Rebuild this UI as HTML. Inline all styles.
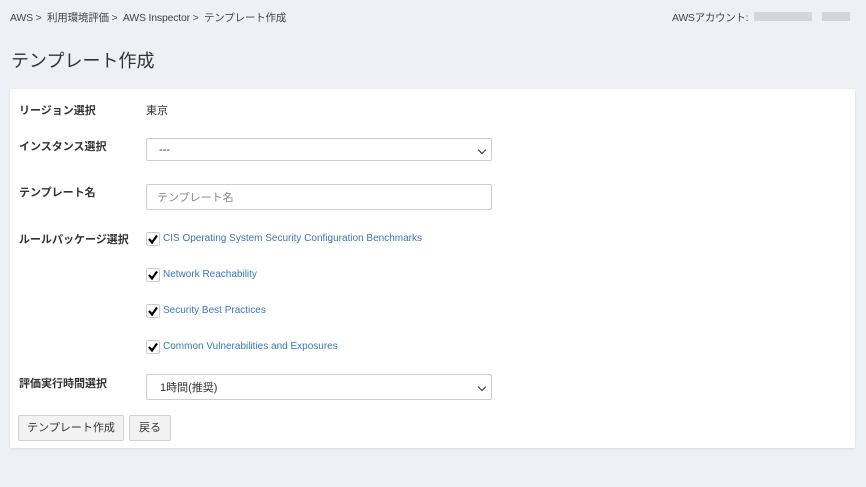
<!DOCTYPE html><html><head><meta charset="utf-8"><style>
body{margin:0;width:866px;height:487px;background:#edf0f5;font-family:"Liberation Sans","Noto Sans CJK JP",sans-serif;color:#333;position:relative;overflow:hidden}
.a{position:absolute;white-space:nowrap}
.bc{top:10px;left:10px;font-size:10.5px;color:#444;letter-spacing:-0.2px}
.acc{top:10px;left:672px;font-size:10.5px;color:#444;letter-spacing:-0.3px}
.blur{position:absolute;top:12px;height:9px;background:#d4d6da}
h1{position:absolute;top:47px;left:11px;margin:0;font-weight:normal;font-size:18px;color:#333}
.panel{position:absolute;left:10px;top:89px;width:845px;height:359px;background:#fff;border-radius:2px;box-shadow:0 1px 2px rgba(0,0,0,.08)}
.lb{font-size:11px;font-weight:bold;color:#333;left:19px}
.box{position:absolute;left:146px;width:345px;border:1px solid #ccc;border-radius:2px;background:#fff;font-size:11px;color:#333}
.chev{position:absolute;right:6px;top:8px;width:5px;height:5px;border-right:1.5px solid #333;border-bottom:1.5px solid #333;transform:rotate(45deg)}
.cb{position:absolute;left:146px;width:12px;height:12px;border:1px solid #ccc;border-radius:2px;background:#fff}
.cb svg{position:absolute;left:1px;top:1px}
.lk{left:163px;font-size:10px;color:#3a77b8}
.btn{position:absolute;top:415px;height:24px;border:1px solid #d0d0d0;border-radius:2px;background:#f2f2f2;font-size:11px;line-height:24px;text-align:center;color:#333}
</style></head><body>
<div class="a bc">AWS &gt; &nbsp;利用環境評価 &gt; &nbsp;AWS Inspector &gt; &nbsp;テンプレート作成</div>
<div class="a acc">AWSアカウント:</div>
<div class="blur" style="left:754px;width:58px"></div><div class="blur" style="left:822px;width:28px"></div>
<h1>テンプレート作成</h1>
<div class="panel"></div>
<div class="a lb" style="top:102px">リージョン選択</div>
<div class="a" style="top:102px;left:146px;font-size:11px">東京</div>
<div class="a lb" style="top:138px">インスタンス選択</div>
<div class="box" style="top:138px;height:23px;line-height:23px;padding-left:12px;box-sizing:border-box;width:346px">---<div class="chev"></div></div>
<div class="a lb" style="top:184px">テンプレート名</div>
<div class="box" style="top:184px;height:26px;line-height:26px;padding-left:10px;box-sizing:border-box;width:346px;color:#888">テンプレート名</div>
<div class="a lb" style="top:231px">ルールパッケージ選択</div>
<div class="cb" style="top:232px"><svg width="10" height="10"><path d="M1 5 L4 8.5 L9 1.5" fill="none" stroke="#000" stroke-width="2.2"/></svg></div><div class="a lk" style="top:233px">CIS Operating System Security Configuration Benchmarks</div>
<div class="cb" style="top:268px"><svg width="10" height="10"><path d="M1 5 L4 8.5 L9 1.5" fill="none" stroke="#000" stroke-width="2.2"/></svg></div><div class="a lk" style="top:269px">Network Reachability</div>
<div class="cb" style="top:304px"><svg width="10" height="10"><path d="M1 5 L4 8.5 L9 1.5" fill="none" stroke="#000" stroke-width="2.2"/></svg></div><div class="a lk" style="top:305px">Security Best Practices</div>
<div class="cb" style="top:340px"><svg width="10" height="10"><path d="M1 5 L4 8.5 L9 1.5" fill="none" stroke="#000" stroke-width="2.2"/></svg></div><div class="a lk" style="top:341px">Common Vulnerabilities and Exposures</div>
<div class="a lb" style="top:375px">評価実行時間選択</div>
<div class="box" style="top:374px;height:26px;line-height:26px;padding-left:13px;box-sizing:border-box;width:346px">1時間(推奨)<div class="chev" style="top:9px"></div></div>
<div class="btn" style="left:18px;width:104px">テンプレート作成</div>
<div class="btn" style="left:129px;width:40px">戻る</div>
</body></html>
